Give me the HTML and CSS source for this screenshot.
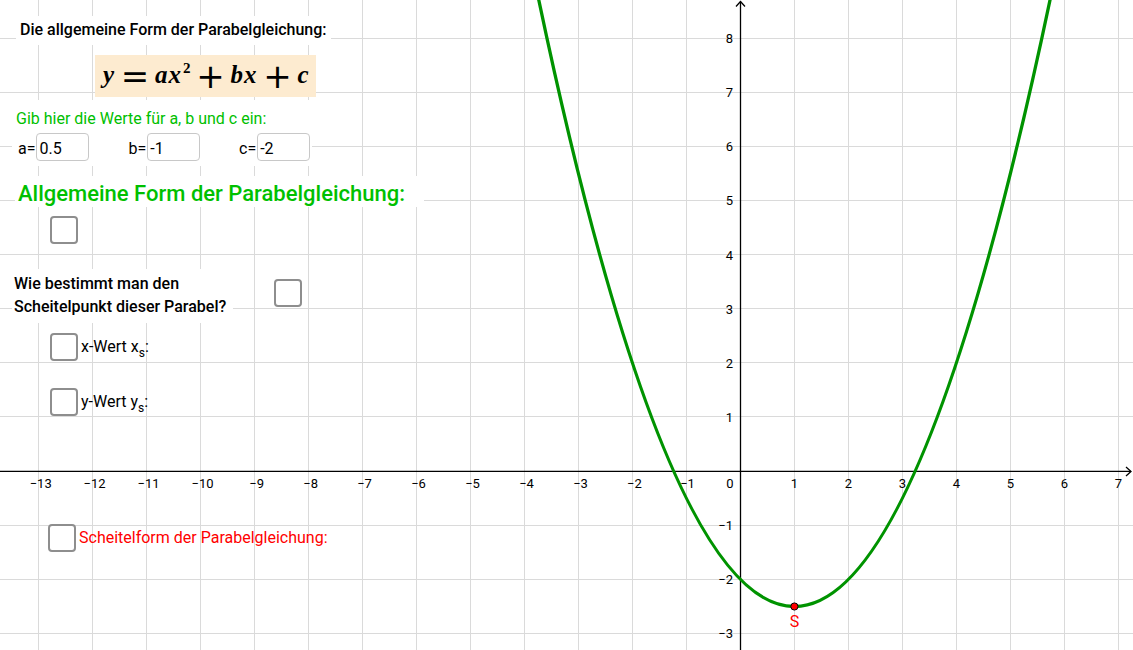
FILE: index.html
```html
<!DOCTYPE html>
<html lang="de">
<head>
<meta charset="utf-8">
<title>Allgemeine Form der Parabelgleichung</title>
<link rel="stylesheet" href="styles.css">
</head>
<body>
<div class="board">
  <svg class="graph" width="1133" height="650" viewBox="0 0 1133 650" xmlns="http://www.w3.org/2000/svg">
    <path class="grid" d="M38.5 0V650M92.5 0V650M146.5 0V650M200.5 0V650M254.5 0V650M308.5 0V650M362.5 0V650M416.5 0V650M470.5 0V650M524.5 0V650M578.5 0V650M632.5 0V650M686.5 0V650M794.5 0V650M848.5 0V650M902.5 0V650M956.5 0V650M1010.5 0V650M1064.5 0V650M1118.5 0V650M0 38.5H1133M0 92.5H1133M0 146.5H1133M0 200.5H1133M0 254.5H1133M0 308.5H1133M0 362.5H1133M0 416.5H1133M0 525.5H1133M0 579.5H1133M0 633.5H1133"/>
    <path class="axis" d="M0 471.4H1131M740.5 1.5V650"/>
    <path class="axis" d="M736 6.5L740.5 1.5L745 6.5M1126 467L1131 471.4L1126 476"/>
    <g class="xl">
      <text x="40.7" y="488">−13</text>
      <text x="94.6" y="488">−12</text>
      <text x="148.6" y="488">−11</text>
      <text x="202.6" y="488">−10</text>
      <text x="256.6" y="488">−9</text>
      <text x="310.6" y="488">−8</text>
      <text x="364.5" y="488">−7</text>
      <text x="418.5" y="488">−6</text>
      <text x="472.5" y="488">−5</text>
      <text x="526.5" y="488">−4</text>
      <text x="580.5" y="488">−3</text>
      <text x="634.4" y="488">−2</text>
      <text x="687.5" y="488">−1</text>
      <text x="730" y="488">0</text>
      <text x="794.4" y="488">1</text>
      <text x="848.4" y="488">2</text>
      <text x="902.3" y="488">3</text>
      <text x="956.3" y="488">4</text>
      <text x="1010.3" y="488">5</text>
      <text x="1064.3" y="488">6</text>
      <text x="1118.3" y="488">7</text>
    </g>
    <g class="yl">
      <text x="733" y="43">8</text>
      <text x="733" y="97">7</text>
      <text x="733" y="151">6</text>
      <text x="733" y="205">5</text>
      <text x="733" y="259.5">4</text>
      <text x="733" y="313.5">3</text>
      <text x="733" y="367.6">2</text>
      <text x="733" y="421.7">1</text>
      <text x="733" y="530">−1</text>
      <text x="733" y="584">−2</text>
      <text x="733" y="638">−3</text>
    </g>
    <path class="curve" d="M535.3 -16.6Q794.4 1229.6 1053.5 -16.6"/>
    <circle class="vertex" cx="794.4" cy="606.5" r="3.6"/>
    <text class="s-label" x="794.4" y="627">S</text>
  </svg>

  <div class="panel">
    <div class="title white">Die allgemeine Form der Parabelgleichung:</div>
    <div class="formula"><span class="mi">y</span><span class="op">=</span><span class="mi">a</span><span class="mi">x</span><sup class="pow">2</sup><span class="op">+</span><span class="mi">b</span><span class="mi">x</span><span class="op">+</span><span class="mi">c</span></div>
    <div class="inputs white">
      <div class="hint">Gib hier die Werte für a, b und c ein:</div>
      <div class="fields">
        <div class="field"><span class="lbl">a=</span><span class="value">0.5</span></div>
        <div class="field"><span class="lbl">b=</span><span class="value">-1</span></div>
        <div class="field"><span class="lbl">c=</span><span class="value">-2</span></div>
      </div>
    </div>
    <div class="heading white">Allgemeine Form der Parabelgleichung:</div>
    <div class="check solo"></div>
    <div class="question-row">
      <div class="question white">Wie bestimmt man den<br>Scheitelpunkt dieser Parabel?</div>
      <div class="check ask"></div>
    </div>
    <div class="check-row row-x"><span class="check"></span><span class="opt">x-Wert x<sub>s</sub>:</span></div>
    <div class="check-row row-y"><span class="check"></span><span class="opt">y-Wert y<sub>s</sub>:</span></div>
    <div class="check-row row-s"><span class="check"></span><span class="opt red">Scheitelform der Parabelgleichung:</span></div>
  </div>
</div>
</body>
</html>
```

FILE: styles.css
```css
html, body {
  margin: 0;
  padding: 0;
  background: #fff;
  overflow: hidden;
}

.board {
  position: relative;
  width: 1133px;
  height: 650px;
  overflow: hidden;
  font-family: Roboto, "Liberation Sans", sans-serif;
}

.graph {
  display: block;
}

.grid {
  fill: none;
  stroke: #dadada;
  stroke-width: 1;
}

.axis {
  fill: none;
  stroke: #000;
  stroke-width: 1.3;
}

.xl text,
.yl text {
  font-family: Roboto, "Liberation Sans", sans-serif;
  font-size: 13px;
  fill: #000;
}

.xl text {
  text-anchor: middle;
}

.yl text {
  text-anchor: end;
}

.curve {
  fill: none;
  stroke: #009300;
  stroke-width: 3.3;
}

.vertex {
  fill: #ff0000;
  stroke: #000;
  stroke-width: 1;
}

.s-label {
  font-family: Roboto, "Liberation Sans", sans-serif;
  font-size: 16px;
  fill: #ff0000;
  text-anchor: middle;
}

/* overlay panel with the construction's texts */
.panel {
  position: absolute;
  left: 0;
  top: 0;
  width: 440px;
  font-size: 16px;
  color: #000;
}

.white {
  background: #fff;
}

.title {
  width: max-content;
  margin: 16px 0 0 16px;
  padding: 4px 4px 6px;
  line-height: 19px;
  font-weight: 500;
}

.formula {
  width: 221px;
  height: 42px;
  box-sizing: border-box;
  margin: 10px 0 0 95px;
  padding: 0 0 2px 8px;
  background: #fdebd0;
  font-family: "Liberation Serif", "Times New Roman", serif;
  font-size: 25px;
  font-weight: bold;
  font-style: italic;
  line-height: 40px;
  white-space: nowrap;
}

.formula .mi {
  margin-right: 1px;
}

.formula .op {
  display: inline-block;
  width: 40px;
  text-align: center;
  font-family: "DejaVu Sans", sans-serif;
  font-style: normal;
  font-weight: normal;
  font-size: 34px;
  line-height: 0;
  vertical-align: -5px;
}

.formula .pow {
  font-size: 15px;
  font-style: normal;
  line-height: 0;
  vertical-align: 10px;
  margin-left: 1px;
}

.inputs {
  width: 300px;
  box-sizing: border-box;
  margin: 3px 0 0 12px;
  padding: 8.5px 0 5px 4px;
}

.hint {
  line-height: 19px;
  color: #00c000;
}

.fields {
  display: flex;
  margin: 5.5px 0 0 2px;
}

.field {
  display: flex;
  align-items: baseline;
  flex: none;
  width: 110.5px;
}

.lbl {
  line-height: 19px;
}

.value {
  width: 53px;
  height: 28px;
  box-sizing: border-box;
  margin-left: 1px;
  padding: 4px 0 0 2px;
  border: 1px solid #c8c8c8;
  border-radius: 4px;
  line-height: 22px;
  background: #fff;
}

.heading {
  width: max-content;
  margin: 10px 0 0 15px;
  padding: 5px 19px 0 3px;
  font-size: 22px;
  font-weight: 500;
  line-height: 26px;
  color: #00c000;
}

.check {
  display: block;
  width: 28px;
  height: 28px;
  box-sizing: border-box;
  border: 2px solid #8e8e8e;
  border-radius: 4px;
  background: #fff;
  flex: none;
}

.solo {
  margin: 9px 0 0 50px;
}

.question-row {
  display: flex;
  align-items: flex-start;
  margin-top: 25px;
}

.question {
  width: 221px;
  box-sizing: border-box;
  margin-left: 12px;
  padding: 3px 5px 5px 2px;
  font-weight: 500;
  line-height: 23px;
  white-space: nowrap;
}

.ask {
  margin: 10px 0 0 41px;
}

.check-row {
  display: flex;
  align-items: flex-start;
  margin-left: 50px;
}

.row-x {
  margin-top: 10px;
}

.row-y {
  margin-top: 27px;
}

.row-s {
  margin-top: 108px;
  margin-left: 48px;
}

.opt {
  margin-left: 3px;
  line-height: 28px;
  white-space: nowrap;
}

.opt sub {
  font-size: 12px;
  line-height: 0;
  vertical-align: -5px;
}

.red {
  color: #ff0000;
}
```
